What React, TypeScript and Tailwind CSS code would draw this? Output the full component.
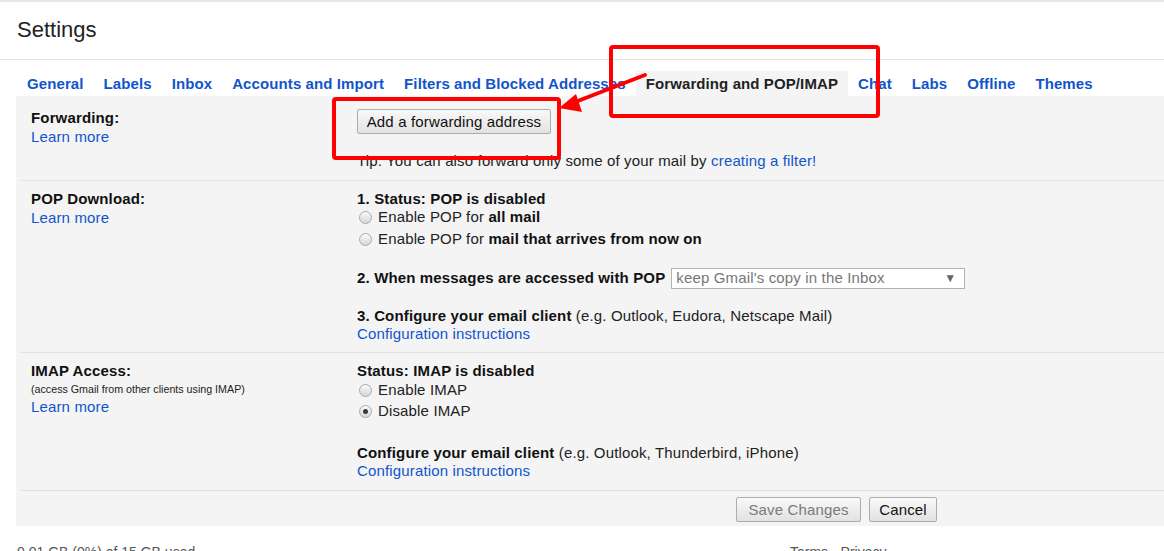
import React from "react";

const tabs = [
  "General",
  "Labels",
  "Inbox",
  "Accounts and Import",
  "Filters and Blocked Addresses",
  "Forwarding and POP/IMAP",
  "Chat",
  "Labs",
  "Offline",
  "Themes",
];

function Radio({ checked = false }: { checked?: boolean }) {
  return (
    <span className="relative ml-[2px] mr-[6px] inline-flex h-[13px] w-[13px] shrink-0 items-center justify-center rounded-full border border-[#a9a9a9] bg-linear-to-b from-[#fbfbfb] to-[#d6d6d6]">
      {checked && <span className="h-[5px] w-[5px] rounded-full bg-[#3a3a3a]" />}
    </span>
  );
}

function Btn({ children, muted = false, w }: { children: React.ReactNode; muted?: boolean; w: string }) {
  return (
    <button
      className={`${w} h-[25px] rounded-[2px] border border-[#adadad] bg-linear-to-b from-[#f9f9f9] to-[#e2e2e2] text-[15px] leading-[23px] tracking-[0.15px] ${
        muted ? "text-[#7a7a7a]" : "text-[#111]"
      }`}
    >
      {children}
    </button>
  );
}

export default function App() {
  return (
    <div className="relative h-[551px] w-[1164px] overflow-hidden border-t-2 border-[#e6e6e6] bg-white font-['Liberation_Sans',Arial,sans-serif] text-[15px] tracking-[0.15px] text-[#222]">
      {/* Header */}
      <div className="h-[58px] border-b border-[#e5e5e5] pl-[17px] pt-[15px] text-[22px] leading-[26px] tracking-normal text-[#222]">
        Settings
      </div>

      {/* Tabs */}
      <div className="mt-[11px] flex pl-[17px]">
        {tabs.map((t) => {
          const active = t === "Forwarding and POP/IMAP";
          return (
            <div
              key={t}
              className={`h-[25px] whitespace-nowrap px-[10px] text-[15px] font-bold leading-[25px] tracking-[0.1px] ${
                active ? "bg-[#f4f4f4] text-[#222]" : "text-[#1155cc]"
              }`}
            >
              {t}
            </div>
          );
        })}
      </div>

      {/* Panel */}
      <div className="ml-[16px] h-[430px] bg-[#f4f4f4] leading-[18px]">
        {/* Forwarding */}
        <div className="ml-[5px] flex h-[85px] border-b border-[#e0e0e0]">
          <div className="w-[336px] pl-[10px] pt-[13px]">
            <div className="font-bold text-[#111]">Forwarding:</div>
            <div className="mt-[1px] text-[#1155cc]">Learn more</div>
          </div>
          <div className="flex-1 pt-[13px]">
            <Btn w="w-[194px]">Add a forwarding address</Btn>
            <div className="mt-[18px]">
              Tip: You can also forward only some of your mail by{" "}
              <span className="text-[#1155cc]">creating a filter!</span>
            </div>
          </div>
        </div>

        {/* POP */}
        <div className="ml-[5px] flex h-[172px] border-b border-[#e0e0e0]">
          <div className="w-[336px] pl-[10px] pt-[9px]">
            <div className="font-bold text-[#111]">POP Download:</div>
            <div className="mt-[1px] text-[#1155cc]">Learn more</div>
          </div>
          <div className="flex-1 pt-[9px]">
            <div className="h-[18px] font-bold text-[#111]">1. Status: POP is disabled</div>
            <div className="flex h-[18px] items-center">
              <Radio />
              <span>
                Enable POP for <b className="text-[#111]">all mail</b>
              </span>
            </div>
            <div className="mt-[4px] flex h-[18px] items-center">
              <Radio />
              <span>
                Enable POP for <b className="text-[#111]">mail that arrives from now on</b>
              </span>
            </div>
            <div className="mt-[19px] flex h-[22px] items-center">
              <b className="text-[#111]">2. When messages are accessed with POP</b>
              <div className="ml-[6px] flex h-[21px] w-[294px] items-center justify-between border border-[#b3b3b3] bg-white pl-[4px] pr-[8px] text-[#777]">
                <span>keep Gmail's copy in the Inbox</span>
                <span className="text-[12px] text-[#666]">▼</span>
              </div>
            </div>
            <div className="mt-[18px] h-[18px]">
              <b className="text-[#111]">3. Configure your email client</b> (e.g. Outlook, Eudora, Netscape Mail)
            </div>
            <div className="h-[18px] text-[#1155cc]">Configuration instructions</div>
          </div>
        </div>

        {/* IMAP */}
        <div className="ml-[5px] flex h-[138px] border-b border-[#e0e0e0]">
          <div className="w-[336px] pl-[10px] pt-[9px]">
            <div className="font-bold text-[#111]">IMAP Access:</div>
            <div className="text-[10.7px] leading-[18px] tracking-normal text-[#222]">
              (access Gmail from other clients using IMAP)
            </div>
            <div className="text-[#1155cc]">Learn more</div>
          </div>
          <div className="flex-1 pt-[9px]">
            <div className="h-[18px] font-bold text-[#111]">Status: IMAP is disabled</div>
            <div className="mt-[1px] flex h-[18px] items-center">
              <Radio />
              <span>Enable IMAP</span>
            </div>
            <div className="mt-[3px] flex h-[18px] items-center">
              <Radio checked />
              <span>Disable IMAP</span>
            </div>
            <div className="mt-[24px] h-[18px]">
              <b className="text-[#111]">Configure your email client</b> (e.g. Outlook, Thunderbird, iPhone)
            </div>
            <div className="h-[18px] text-[#1155cc]">Configuration instructions</div>
          </div>
        </div>

        {/* Buttons */}
        <div className="flex gap-[8px] pl-[720px] pt-[6px]">
          <Btn w="w-[125px]" muted>
            Save Changes
          </Btn>
          <Btn w="w-[68px]">Cancel</Btn>
        </div>
      </div>

      {/* Footer */}
      <div className="flex pt-[18px] text-[14px] leading-[16px] tracking-normal text-[#555]">
        <span className="w-[790px] pl-[17px]">0.01 GB (0%) of 15 GB used</span>
        <span>Terms - Privacy</span>
      </div>

      {/* Red annotations */}
      <svg
        className="pointer-events-none absolute left-0 top-0"
        width="1164"
        height="551"
        viewBox="0 0 1164 551"
      >
        <rect x="611" y="45" width="267" height="69" rx="2" fill="none" stroke="#ff0000" strokeWidth="4" />
        <rect x="334" y="97" width="225" height="59" rx="2" fill="none" stroke="#ff0000" strokeWidth="4" />
        <line x1="645" y1="73" x2="570" y2="102" stroke="#ff0000" strokeWidth="4" strokeLinecap="round" />
        <polygon points="559,106 576,92 582,110" fill="#ff0000" />
      </svg>
    </div>
  );
}
